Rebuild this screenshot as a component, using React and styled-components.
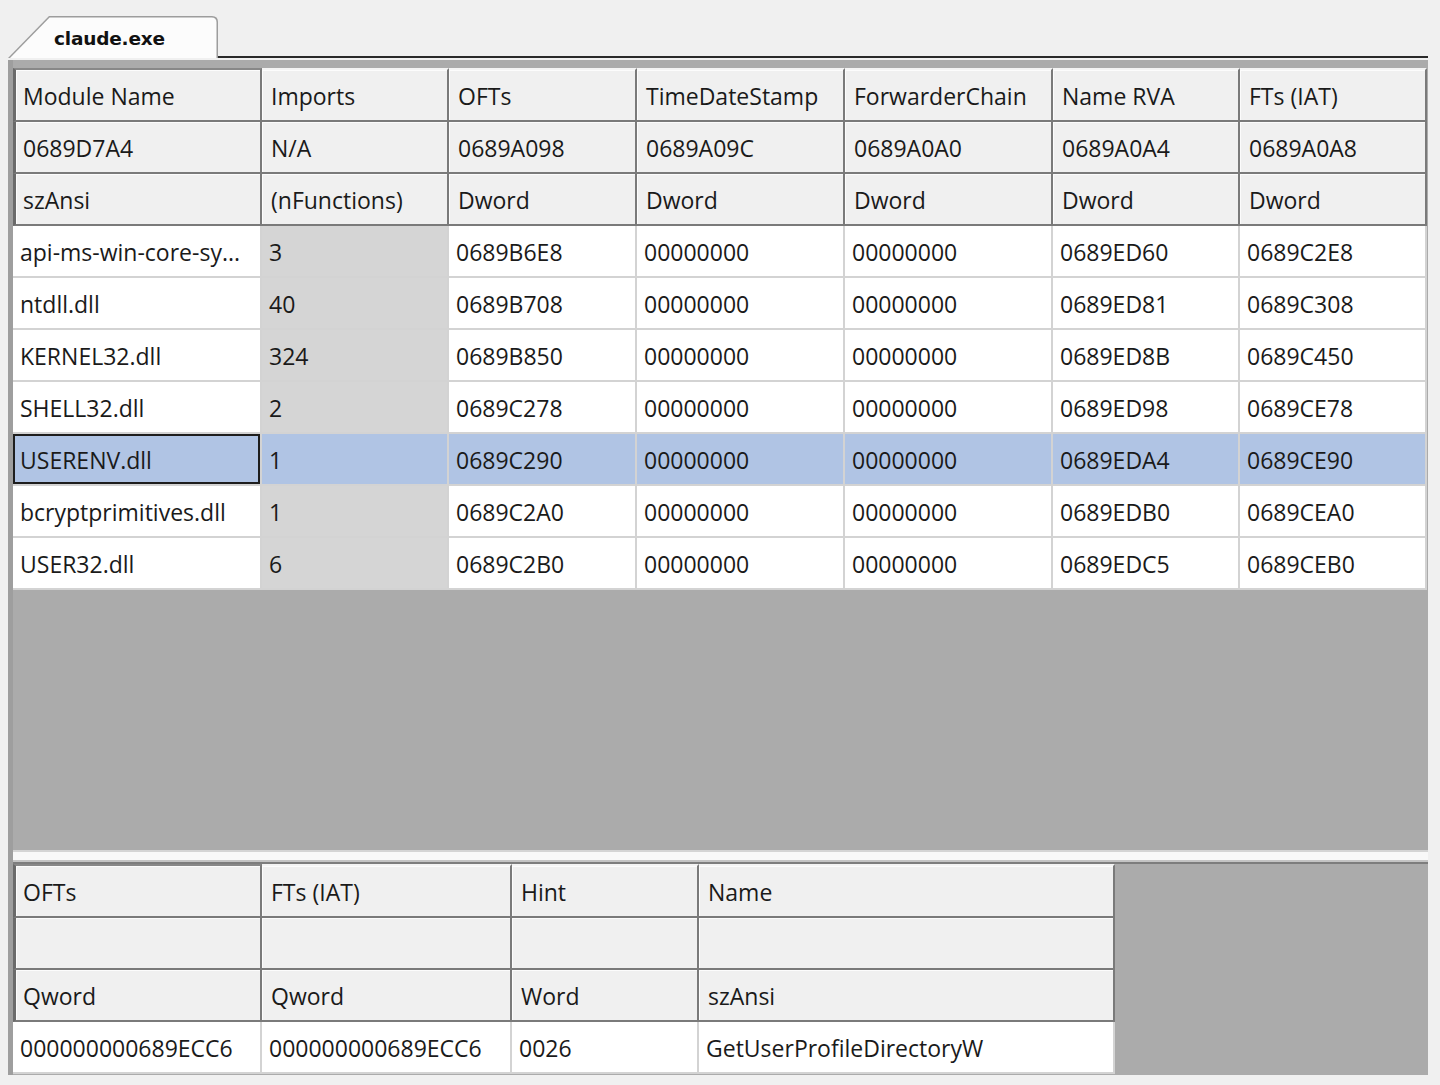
import React from 'react';
import styled, { createGlobalStyle, css } from 'styled-components';

const GlobalStyle = createGlobalStyle`
  html, body {
    margin: 0;
    padding: 0;
    background: #f0f0f0;
  }
  body {
    font-family: "Open Sans", "Noto Sans", sans-serif;
  }
`;

const Page = styled.div`
  width: 1440px;
  height: 1085px;
  box-sizing: border-box;
  padding: 16px 12px 10px 8px;
  display: flex;
  flex-direction: column;
`;

const TabStrip = styled.div`
  display: flex;
  height: 42px;
  flex-shrink: 0;
`;

const TabShape = styled.div`
  width: 210px;
  height: 42px;
  background: #9d9d9d;
  clip-path: path('M0 42 L41 0 L204 0 Q210 0 210 6 L210 42 Z');
`;

const TabFace = styled.div`
  width: 210px;
  height: 42px;
  box-sizing: border-box;
  padding: 2px 0 0 46px;
  display: flex;
  align-items: center;
  background: #fcfcfc;
  clip-path: path('M2 42 L41.6 1.5 L203.5 1.5 Q208.5 1.5 208.5 6.5 L208.5 42 Z');
  font-family: "DejaVu Sans", Verdana, sans-serif;
  font-weight: bold;
  font-size: 18.5px;
  letter-spacing: -0.2px;
  color: #111;
`;

const TabRule = styled.div`
  flex: 1;
  box-sizing: border-box;
  border-bottom: 2px solid #2a2a2a;
`;

const Frame = styled.div`
  flex: 1;
  margin-top: 2px;
  display: flex;
  flex-direction: column;
  border-left: 5px solid #9e9e9e;
  min-height: 0;
`;

const Workspace = styled.div`
  background: #ababab;
  display: flex;
  align-items: flex-start;
  ${p => p.$grow ? css`
    flex: 1;
    padding-top: 8px;
  ` : css`
    flex-shrink: 0;
    border-top: 2px solid #7d7d7d;
    padding-bottom: 1px;
  `}
`;

const Splitter = styled.div`
  height: 12px;
  flex-shrink: 0;
  box-sizing: border-box;
  background: #f8f8f8;
  border-top: 2px solid #d4d4d4;
  border-bottom: 2px solid #c4c4c4;
`;

const Table = styled.div`
  display: grid;
  grid-template-columns: ${p => p.$cols};
  grid-template-rows: 54px;
  grid-auto-rows: 52px;
`;

const cellText = css`
  box-sizing: border-box;
  display: flex;
  align-items: center;
  white-space: nowrap;
  overflow: hidden;
  font-size: 23px;
  color: #1a1a1a;
`;

const HeadCell = styled.div`
  ${cellText}
  padding: 1px 6px 0 9px;
  background: #f0f0f0;
  border-right: 2px solid #7a7a7a;
  border-bottom: 2px solid #7a7a7a;
  box-shadow: inset 1px 1px 0 #fcfcfc;
  ${p => p.$first && css`
    border-top: 2px solid #f4f4f4;
  `}
  ${p => p.$fixed && css`
    border-left: 3px solid #6a6a6a;
    padding-left: 7px;
  `}
  ${p => p.$first && p.$fixed && css`
    border-top: 2px solid #888;
  `}
`;

const DataCell = styled.div`
  ${cellText}
  padding: 1px 6px 0 7px;
  background: ${p => p.$selected ? '#b0c4e4' : p.$shade ? '#d5d5d5' : '#fff'};
  border-right: 2px solid #d3d3d3;
  border-bottom: 2px solid #d3d3d3;
  ${p => p.$focus && css`
    box-shadow: inset 0 0 0 2px #1e1e1e;
  `}
`;

const moduleHeaders = [
  ['Module Name', 'Imports', 'OFTs', 'TimeDateStamp', 'ForwarderChain', 'Name RVA', 'FTs (IAT)'],
  ['0689D7A4', 'N/A', '0689A098', '0689A09C', '0689A0A0', '0689A0A4', '0689A0A8'],
  ['szAnsi', '(nFunctions)', 'Dword', 'Dword', 'Dword', 'Dword', 'Dword'],
];

const modules = [
  ['api-ms-win-core-sy...', '3', '0689B6E8', '00000000', '00000000', '0689ED60', '0689C2E8'],
  ['ntdll.dll', '40', '0689B708', '00000000', '00000000', '0689ED81', '0689C308'],
  ['KERNEL32.dll', '324', '0689B850', '00000000', '00000000', '0689ED8B', '0689C450'],
  ['SHELL32.dll', '2', '0689C278', '00000000', '00000000', '0689ED98', '0689CE78'],
  ['USERENV.dll', '1', '0689C290', '00000000', '00000000', '0689EDA4', '0689CE90'],
  ['bcryptprimitives.dll', '1', '0689C2A0', '00000000', '00000000', '0689EDB0', '0689CEA0'],
  ['USER32.dll', '6', '0689C2B0', '00000000', '00000000', '0689EDC5', '0689CEB0'],
];

const importHeaders = [
  ['OFTs', 'FTs (IAT)', 'Hint', 'Name'],
  ['', '', '', ''],
  ['Qword', 'Qword', 'Word', 'szAnsi'],
];

const imports = [
  ['000000000689ECC6', '000000000689ECC6', '0026', 'GetUserProfileDirectoryW'],
];

const SELECTED = 4;

export default function App() {
  return (
    <>
      <GlobalStyle />
      <Page>
        <TabStrip>
          <TabShape>
            <TabFace>claude.exe</TabFace>
          </TabShape>
          <TabRule />
        </TabStrip>

        <Frame>
          <Workspace $grow>
            <Table $cols="249px 187px 188px 208px 208px 187px 187px">
              {moduleHeaders.map((row, r) =>
                row.map((text, c) => (
                  <HeadCell key={`h${r}-${c}`} $first={r === 0} $fixed={c === 0}>
                    {text}
                  </HeadCell>
                ))
              )}
              {modules.map((row, r) =>
                row.map((text, c) => (
                  <DataCell
                    key={`d${r}-${c}`}
                    $shade={c === 1}
                    $selected={r === SELECTED}
                    $focus={r === SELECTED && c === 0}
                  >
                    {text}
                  </DataCell>
                ))
              )}
            </Table>
          </Workspace>

          <Splitter />

          <Workspace>
            <Table $cols="249px 250px 187px 416px">
              {importHeaders.map((row, r) =>
                row.map((text, c) => (
                  <HeadCell key={`ih${r}-${c}`} $first={r === 0} $fixed={c === 0}>
                    {text}
                  </HeadCell>
                ))
              )}
              {imports.map((row, r) =>
                row.map((text, c) => (
                  <DataCell key={`id${r}-${c}`}>{text}</DataCell>
                ))
              )}
            </Table>
          </Workspace>
        </Frame>
      </Page>
    </>
  );
}
